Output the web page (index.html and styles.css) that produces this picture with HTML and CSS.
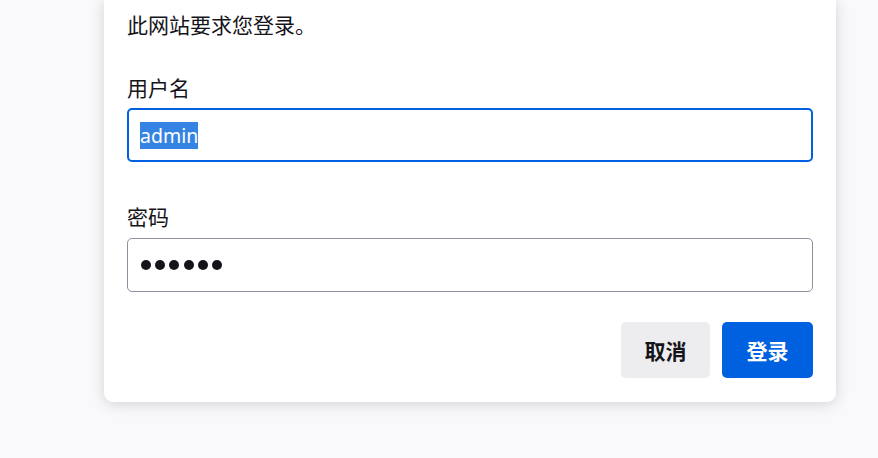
FILE: index.html
```html
<!DOCTYPE html>
<html lang="zh-CN">
<head>
  <meta charset="UTF-8">
  <meta name="viewport" content="width=device-width, initial-scale=1.0">
  <title>身份验证</title>
  <link rel="stylesheet" href="styles.css">
</head>
<body>
  <div class="dialog">
    <p class="intro">此网站要求您登录。</p>

    <label class="label">用户名</label>
    <div class="field focused">
      <span class="selected">admin</span>
    </div>

    <label class="label label-pass">密码</label>
    <div class="field">
      <span class="dot"></span>
      <span class="dot"></span>
      <span class="dot"></span>
      <span class="dot"></span>
      <span class="dot"></span>
      <span class="dot"></span>
    </div>

    <div class="actions">
      <button class="btn btn-cancel">取消</button>
      <button class="btn btn-primary">登录</button>
    </div>
  </div>
</body>
</html>
```

FILE: styles.css
```css
body {
  margin: 0;
  padding-left: 104px;
  background: #f9f9fb;
  font-family: "Noto Sans", "Noto Sans CJK SC", sans-serif;
  color: #15141a;
  height: 458px;
  overflow: hidden;
}

.dialog {
  width: 732px;
  box-sizing: border-box;
  padding: 10px 23px 24px;
  background: #fff;
  border-radius: 0 0 9px 9px;
  box-shadow: 0 2px 14px rgba(58, 57, 68, 0.2);
  display: flex;
  flex-direction: column;
}

.intro {
  margin: 0;
  font-size: 21px;
  line-height: 30px;
}

.label {
  display: block;
  margin-top: 33px;
  margin-bottom: 5px;
  font-size: 21px;
  line-height: 30px;
}

.label-pass {
  margin-top: 40px;
  margin-bottom: 6px;
}

.field {
  height: 54px;
  box-sizing: border-box;
  border: 1px solid #8f8f9d;
  border-radius: 5px;
  padding: 0 13px;
  display: flex;
  align-items: center;
  gap: 4.2px;
}

.field.focused {
  border: 2px solid #0061e0;
  padding: 0 11px;
}

.selected {
  background: #3584e4;
  color: #fff;
  font-size: 19.5px;
  line-height: 27px;
}

.dot {
  width: 10px;
  height: 10px;
  border-radius: 50%;
  background: #15141a;
}

.actions {
  margin-top: 30px;
  display: flex;
  justify-content: flex-end;
  gap: 12px;
}

.btn {
  height: 56px;
  padding: 0 23.5px;
  border: none;
  border-radius: 5px;
  font-family: inherit;
  font-size: 21px;
  font-weight: 700;
  cursor: pointer;
}

.btn-cancel {
  background: #ededf0;
  color: #15141a;
}

.btn-primary {
  background: #0061e0;
  color: #fff;
  padding: 0 24.5px;
}
```
